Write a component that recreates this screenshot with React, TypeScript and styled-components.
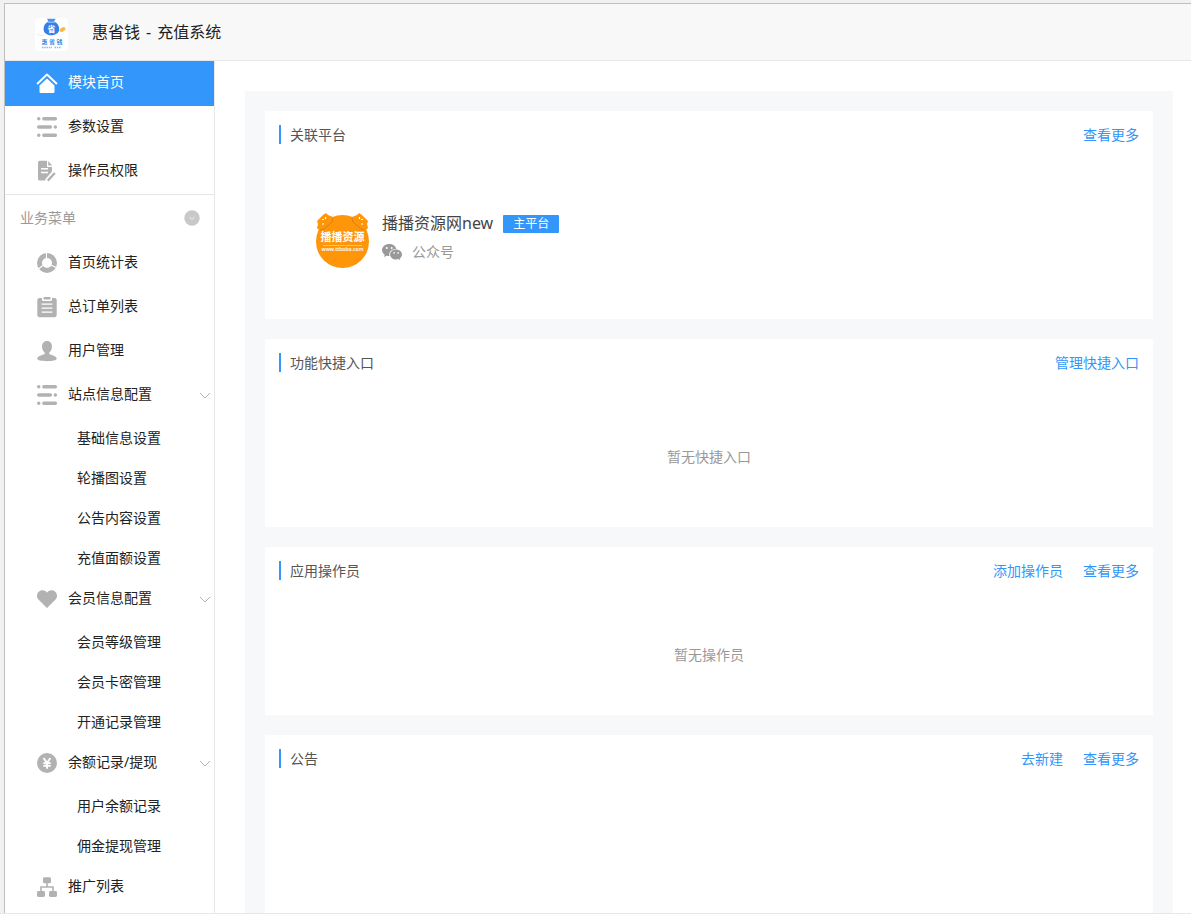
import React, { useState } from "react";
import styled, { createGlobalStyle, css } from "styled-components";

const blue = "#3296fa";
const iconGray = "#b2b2b2";

const GlobalStyle = createGlobalStyle`
  *, *::before, *::after { box-sizing: border-box; }
  body {
    margin: 0;
    background: #fff;
    color: #222;
    font-family: "Noto Sans", "Noto Sans CJK SC", sans-serif;
    font-size: 14px;
    line-height: 20px;
  }
  a { color: inherit; text-decoration: none; }
  button {
    padding: 0;
    border: 0;
    background: none;
    color: inherit;
    font: inherit;
    text-align: left;
    cursor: pointer;
  }
  h1, h2, p, ul { margin: 0; padding: 0; font-weight: 400; }
  ul { list-style: none; }
`;

const Page = styled.div`
  display: flex;
  flex-direction: column;
  min-height: 100vh;
  padding-bottom: 8px;
`;

const Backdrop = styled.div`
  display: flex;
  flex: 1;
  padding: 3px 0 0 4px;
  border-bottom: 1px solid #e7e7eb;
  background: #f1f1f1;
`;

const Frame = styled.div`
  display: flex;
  flex: 1;
  flex-direction: column;
  border-top: 1px solid #bfbfbf;
  border-left: 1px solid #bfbfbf;
  background: #fff;
`;

const Header = styled.header`
  display: flex;
  align-items: center;
  gap: 24px;
  height: 57px;
  padding-left: 30px;
  border-bottom: 1px solid #e7e7eb;
  background: #f8f8f8;
`;

const Title = styled.h1`
  display: flex;
  gap: 6px;
  color: #222;
  font-size: 16px;
  line-height: 24px;
`;

const Body = styled.div`
  display: flex;
  flex: 1;
`;

const Sidebar = styled.nav`
  flex: none;
  width: 210px;
  border-right: 1px solid #e7e7eb;
`;

const TopMenu = styled.ul`
  padding-bottom: 1px;
  border-bottom: 1px solid #e7e7eb;
`;

const menuRow = css`
  display: flex;
  align-items: center;
  gap: 10px;
  width: 100%;
  height: 44px;
  padding: 0 3px 0 31px;
`;

const MenuLink = styled.a<{ $active?: boolean }>`
  ${menuRow}
  ${(p) =>
    p.$active &&
    css`
      background: ${blue};
      box-shadow: 0 1px 0 ${blue};
      color: #fff;
    `}
`;

const MenuToggle = styled.button`
  ${menuRow}
`;

const MenuIcon = styled.svg`
  flex: none;
  width: 22px;
  height: 22px;
`;

const MenuLabel = styled.span`
  flex: 1;
  padding-bottom: 2px;
`;

const SectionHead = styled.div`
  display: flex;
  align-items: center;
  justify-content: space-between;
  height: 46px;
  padding: 0 14px 0 15px;
  color: #9a9a9a;
`;

const RoundButton = styled.button`
  display: flex;
  svg { width: 16px; height: 16px; }
`;

const Chevron = styled.svg<{ $open: boolean }>`
  flex: none;
  width: 12px;
  height: 8px;
  transform: ${(p) => (p.$open ? "none" : "rotate(180deg)")};
`;

const SubLink = styled.a`
  display: flex;
  align-items: center;
  height: 40px;
  padding: 2px 0 0 72px;
`;

const Main = styled.main`
  display: flex;
  flex: 1;
  padding: 30px 18px 0 30px;
`;

const Panel = styled.div`
  display: flex;
  flex: 1;
  flex-direction: column;
  gap: 20px;
  padding: 20px 20px 0;
  background: #f6f8fa;
`;

const Card = styled.section<{ $height: number; $grow?: boolean }>`
  display: flex;
  flex-direction: column;
  flex-grow: ${(p) => (p.$grow ? 1 : 0)};
  min-height: ${(p) => p.$height}px;
  padding: 14px;
  background: #fff;
`;

const CardHead = styled.div`
  display: flex;
  align-items: flex-start;
  gap: 20px;
  height: 20px;
`;

const CardTitle = styled.h2`
  flex: 1;
  padding-left: 9px;
  border-left: 2px solid ${blue};
  color: #555;
  font-size: 14px;
  line-height: 19px;
`;

const CardLink = styled.a`
  color: ${blue};
`;

const Empty = styled.p`
  display: flex;
  flex: 1;
  align-items: center;
  justify-content: center;
  padding-top: 28px;
  color: #999;
`;

const Platform = styled.div`
  display: flex;
  align-items: flex-start;
  gap: 12px;
  padding: 66px 0 0 36px;
`;

const Avatar = styled.svg`
  width: 55px;
  height: 58px;
`;

const PlatformInfo = styled.div`
  display: flex;
  flex-direction: column;
  gap: 7px;
`;

const InfoRow = styled.div`
  display: flex;
  align-items: center;
  gap: 10px;
  color: #999;
`;

const PlatformName = styled.span`
  color: #444;
  font-size: 16px;
  line-height: 24px;
`;

const Badge = styled.span`
  margin-top: 2px;
  padding: 0 10px;
  border-radius: 1px;
  background: ${blue};
  color: #fff;
  font-size: 12px;
  line-height: 18px;
`;

const LogoBox = styled.svg`
  width: 33px;
  height: 33px;
  margin-top: 4px;
`;

type IconName = "home" | "sliders" | "doc" | "donut" | "clipboard" | "user" | "heart" | "yen" | "tree";

const iconShapes: Record<IconName, React.ReactNode> = {
  home: (
    <g>
      <path d="M1.6 11.4 11 2.6l9.400 8.800" fill="none" stroke="#fff" strokeWidth="2" strokeLinecap="round" strokeLinejoin="round" />
      <path d="M3.500 13.400 11 6.400l7.500 7v6.400q0 1.200-1.200 1.200H4.700q-1.200 0-1.200-1.200z" fill="#fff" />
    </g>
  ),
  sliders: (
    <g stroke={iconGray} strokeWidth="3.400" strokeLinecap="round">
      <path d="M2.700 2.800h.1M7.800 2.800h11.600M2.700 11h11.700M19.300 11h.1M2.700 19.200h.1M7.800 19.200h11.600" />
    </g>
  ),
  doc: (
    <g>
      <path fill={iconGray} d="M3.600 .7H11v6.300h5v4.500l-6.500 7.600-.3 1.400H3.600Q2 20.500 2 18.900V2.300q0-1.600 1.600-1.600zM12.200 1l4 4.500h-4z" />
      <path d="M5 8.700h7M5 12.500h7" stroke="#fff" strokeWidth="1.600" />
      <path d="m11.800 20.600 7-7.600" stroke={iconGray} strokeWidth="2.400" />
    </g>
  ),
  donut: (
    <g>
      <circle cx="11" cy="11" r="7.500" fill="none" stroke={iconGray} strokeWidth="5" />
      <path d="M10.500 0v7M1.800 17.500l5-4M20.500 15.500l-5.400-2.300" stroke="#fff" strokeWidth="1.100" />
    </g>
  ),
  clipboard: (
    <g>
      <rect x="1.300" y="2" width="19.400" height="19.200" rx="2.200" fill={iconGray} />
      <path d="M6 1h10v2.500q0 1.500-1.500 1.500h-7Q6 5 6 3.500z" fill="#fff" />
      <rect x="7.400" y="1" width="7.200" height="2.600" rx="1" fill={iconGray} />
      <path d="M5.600 8.200h10.800M5.600 12.200h10.800M5.600 16.200h10.800" stroke="#fff" strokeWidth="1.200" />
    </g>
  ),
  user: (
    <path
      fill={iconGray}
      d="M11 1c3.200 0 5 2.400 5 5.600 0 2.600-1.200 4.800-2.700 6v1.200c.5 1.300 7.400 1.700 7.400 4.800 0 2-4.300 2.600-9.700 2.600s-9.700-.6-9.700-2.600c0-3.100 6.900-3.500 7.400-4.800v-1.200C7.200 11.400 6 9.200 6 6.600 6 3.400 7.800 1 11 1z"
    />
  ),
  heart: (
    <path fill={iconGray} d="M11 20 2.500 11.600C.3 9.200.6 5.800 2.500 3.900 4.900 1.600 8.800 1.800 11 4.700c2.200-2.900 6.100-3.100 8.500-.8 1.900 1.900 2.200 5.300 0 7.700z" />
  ),
  yen: (
    <g>
      <circle cx="11" cy="11" r="10" fill={iconGray} />
      <path d="m7.600 6 3.400 5 3.400-5M11 11v5.800M7.300 11.200h7.400M7.300 13.900h7.400" fill="none" stroke="#fff" strokeWidth="1.900" />
    </g>
  ),
  tree: (
    <g fill={iconGray}>
      <rect x="7" y="1.300" width="8" height="6" rx="1.400" />
      <rect x="1" y="15" width="8" height="6" rx="1.400" />
      <rect x="13" y="15" width="8" height="6" rx="1.400" />
      <path d="M11 7v4M5 15.500V11h12v4.500" fill="none" stroke={iconGray} strokeWidth="1.600" />
    </g>
  ),
};

const Icon = ({ name }: { name: IconName }) => (
  <MenuIcon viewBox="0 0 22 22" aria-hidden="true">
    {iconShapes[name]}
  </MenuIcon>
);

const Logo = () => (
  <LogoBox viewBox="0 0 33 33" aria-hidden="true">
    <rect width="33" height="33" rx="4" fill="#fff" />
    <path d="M1.500 15.500q1.500 2.500 8 1.500" fill="none" stroke="#e5e9ef" />
    <path d="M12 .8h8.500l-1.800 3.400h-5z" fill="#4c92e8" />
    <path d="M13 3.700h6.500c3 1.500 4.700 4.300 4.700 7.300 0 3.900-3.300 6.300-7.900 6.300S8.600 14.900 8.600 11c0-3 1.500-5.800 4.400-7.300z" fill="#347fe9" />
    <path d="M12.500 4.200h7.200" stroke="#a9ccfa" />
    <text x="16.500" y="13.800" fill="#fff" fontSize="8" fontWeight="700" textAnchor="middle">省</text>
    <ellipse cx="27.500" cy="11.500" rx="3.200" ry="2" fill="#f9bb45" transform="rotate(-35 27.500 11.500)" />
    <text x="17" y="25.800" fill="#438be4" fontSize="6" fontWeight="700" textAnchor="middle">惠 省 钱</text>
    <path d="M7 29.500h10M19.500 29.500h7" stroke="#8eb6ec" strokeWidth="1.500" strokeDasharray="1.500 .8" />
  </LogoBox>
);

const PlatformAvatar = () => (
  <Avatar viewBox="0 0 55 58" aria-hidden="true">
    <g fill="#ff960a">
      <circle cx="27.500" cy="30.500" r="26.500" />
      <path d="m2 10 6-6 3-2 2 2 5 2 1 3L5 20l-3-3 1-4zM53 10l-6-6-3-2-2 2-5 2-1 3 14 11 3-3-1-4z" />
    </g>
    <path d="M7 8.500h2M10.500 6v2M7 13h2M48 8.500h-2M44.500 6v2M48 13h-2" stroke="#fff" strokeWidth="1.200" />
    <path d="m5 19 4-1 8-7 1-4M50 19l-4-1-8-7-1-4" fill="none" stroke="#c9781c" strokeWidth=".7" />
    <text x="27.500" y="29.500" fill="#fff" fontSize="11" fontWeight="700" textAnchor="middle">播播资源</text>
    <path d="M8 34.500h39" stroke="#ffc57a" />
    <text x="27.500" y="40" fill="#fff" fontSize="5" fontWeight="600" textAnchor="middle">www.ttbobo.com</text>
  </Avatar>
);

const WechatIcon = () => (
  <svg width="20" height="18" viewBox="0 0 20 18" aria-hidden="true">
    <path fill="#999" d="M7.300 1C3.300 1 0 3.700 0 7.100c0 1.900 1 3.500 2.700 4.700L2 14l2.600-1.300c1 .3 1.900.4 2.900.4-1.300-4 2.200-7.400 6.800-7.200C13.600 3 10.700 1 7.300 1z" />
    <path fill="#999" d="M20 11.400c0-2.800-2.700-5-5.900-5s-6 2.200-6 5 2.700 5.100 6 5.100c.7 0 1.500-.1 2.200-.4l2 1.100-.6-1.800c1.400-1 2.300-2.400 2.300-4z" />
    <g fill="#fff">
      <circle cx="4.800" cy="5" r="1" />
      <circle cx="9.700" cy="5" r="1" />
      <circle cx="12.100" cy="9.900" r=".8" />
      <circle cx="16.100" cy="9.900" r=".8" />
    </g>
  </svg>
);

type Item = { label: string; icon: IconName; children?: string[] };

const topItems: Item[] = [
  { label: "模块首页", icon: "home" },
  { label: "参数设置", icon: "sliders" },
  { label: "操作员权限", icon: "doc" },
];

const businessItems: Item[] = [
  { label: "首页统计表", icon: "donut" },
  { label: "总订单列表", icon: "clipboard" },
  { label: "用户管理", icon: "user" },
  { label: "站点信息配置", icon: "sliders", children: ["基础信息设置", "轮播图设置", "公告内容设置", "充值面额设置"] },
  { label: "会员信息配置", icon: "heart", children: ["会员等级管理", "会员卡密管理", "开通记录管理"] },
  { label: "余额记录/提现", icon: "yen", children: ["用户余额记录", "佣金提现管理"] },
  { label: "推广列表", icon: "tree" },
];

const MenuGroup = ({ item }: { item: Item }) => {
  const [open, setOpen] = useState(true);
  return (
    <li>
      <MenuToggle type="button" aria-expanded={open} onClick={() => setOpen(!open)}>
        <Icon name={item.icon} />
        <MenuLabel>{item.label}</MenuLabel>
        <Chevron $open={open} viewBox="0 0 12 8" aria-hidden="true">
          <path d="m1 2 5 5 5-5" fill="none" stroke="#b5b5b5" />
        </Chevron>
      </MenuToggle>
      {open && (
        <ul>
          {item.children?.map((label) => (
            <li key={label}>
              <SubLink href="#">{label}</SubLink>
            </li>
          ))}
        </ul>
      )}
    </li>
  );
};

const MenuEntry = ({ item, active }: { item: Item; active?: boolean }) => (
  <li>
    <MenuLink href="#" $active={active} aria-current={active ? "page" : undefined}>
      <Icon name={item.icon} />
      <MenuLabel>{item.label}</MenuLabel>
    </MenuLink>
  </li>
);

type SectionProps = {
  title: string;
  links: string[];
  height: number;
  grow?: boolean;
  children?: React.ReactNode;
};

const Section = ({ title, links, height, grow, children }: SectionProps) => (
  <Card $height={height} $grow={grow}>
    <CardHead>
      <CardTitle>{title}</CardTitle>
      {links.map((link) => (
        <CardLink href="#" key={link}>{link}</CardLink>
      ))}
    </CardHead>
    {children}
  </Card>
);

export default function App() {
  const [expanded, setExpanded] = useState(true);
  return (
    <>
      <GlobalStyle />
      <Page>
        <Backdrop>
          <Frame>
            <Header>
              <Logo />
              <Title>
                <span>惠省钱</span>
                <span>-</span>
                <span>充值系统</span>
              </Title>
            </Header>
            <Body>
              <Sidebar>
                <TopMenu>
                  {topItems.map((item, i) => (
                    <MenuEntry key={item.label} item={item} active={i === 0} />
                  ))}
                </TopMenu>
                <SectionHead>
                  <span>业务菜单</span>
                  <RoundButton type="button" aria-label="展开或收起业务菜单" onClick={() => setExpanded(!expanded)}>
                    <svg viewBox="0 0 16 16" aria-hidden="true">
                      <circle cx="8" cy="8" r="7.700" fill="#c8c8c8" />
                      <path d="m5.200 7 2.800 2.400L10.800 7" fill="none" stroke="#f2f2f2" />
                    </svg>
                  </RoundButton>
                </SectionHead>
                {expanded && (
                  <ul>
                    {businessItems.map((item) =>
                      item.children ? (
                        <MenuGroup key={item.label} item={item} />
                      ) : (
                        <MenuEntry key={item.label} item={item} />
                      )
                    )}
                  </ul>
                )}
              </Sidebar>
              <Main>
                <Panel>
                  <Section title="关联平台" links={["查看更多"]} height={208}>
                    <Platform>
                      <PlatformAvatar />
                      <PlatformInfo>
                        <InfoRow>
                          <PlatformName>播播资源网new</PlatformName>
                          <Badge>主平台</Badge>
                        </InfoRow>
                        <InfoRow>
                          <WechatIcon />
                          <span>公众号</span>
                        </InfoRow>
                      </PlatformInfo>
                    </Platform>
                  </Section>
                  <Section title="功能快捷入口" links={["管理快捷入口"]} height={188}>
                    <Empty>暂无快捷入口</Empty>
                  </Section>
                  <Section title="应用操作员" links={["添加操作员", "查看更多"]} height={168}>
                    <Empty>暂无操作员</Empty>
                  </Section>
                  <Section title="公告" links={["去新建", "查看更多"]} height={160} grow />
                </Panel>
              </Main>
            </Body>
          </Frame>
        </Backdrop>
      </Page>
    </>
  );
}
